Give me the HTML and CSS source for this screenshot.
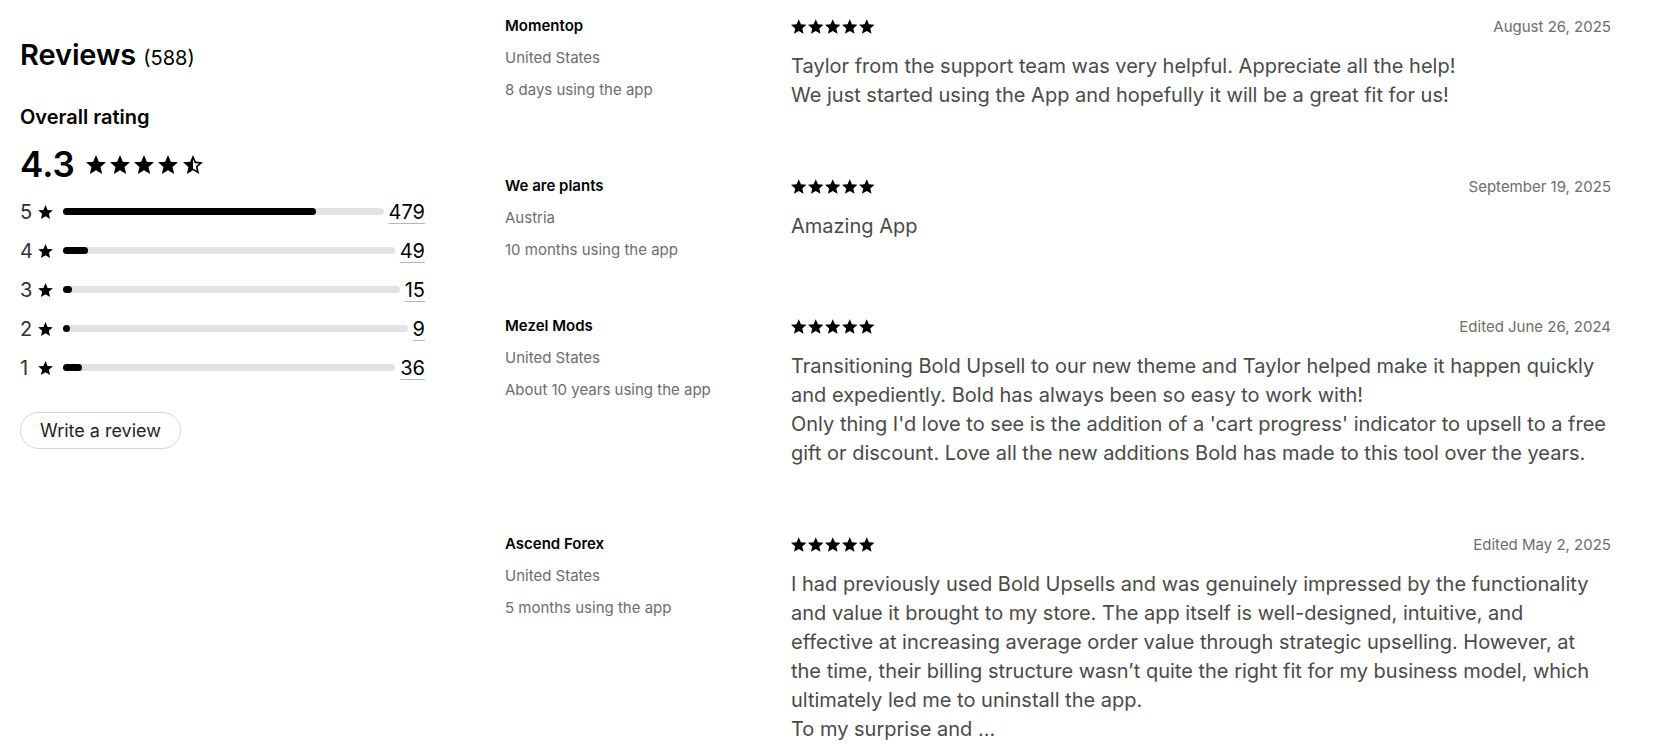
FILE: index.html
```html
<!DOCTYPE html>
<html lang="en">
<head>
<meta charset="utf-8">
<title>Reviews</title>
<link rel="stylesheet" href="styles.css">
</head>
<body>
<svg width="0" height="0" class="defs">
  <defs>
    <symbol id="star" viewBox="2 2 20 19"><path d="M12 17.27L18.18 21l-1.64-7.03L22 9.24l-7.19-.61L12 2 9.19 8.63 2 9.24l5.46 4.73L5.82 21z"/></symbol>
    <symbol id="star-half" viewBox="2 2 20 19"><path d="M22 9.24l-7.19-.62L12 2 9.19 8.63 2 9.24l5.46 4.73L5.82 21 12 17.27 18.18 21l-1.63-7.03L22 9.24zM12 15.4V6.1l1.71 4.04 4.38.38-3.32 2.88 1 4.28L12 15.4z"/></symbol>
  </defs>
</svg>
<div class="page">
  <aside class="summary">
    <h2 class="title">Reviews <span class="total">(588)</span></h2>
    <h3 class="overall-label">Overall rating</h3>
    <div class="overall">
      <span class="score">4.3</span>
      <span class="stars stars-lg">
        <svg><use href="#star"/></svg><svg><use href="#star"/></svg><svg><use href="#star"/></svg><svg><use href="#star"/></svg><svg><use href="#star-half"/></svg>
      </span>
    </div>
    <div class="bars">
      <div class="bar-row"><span class="lvl">5</span><svg class="lvl-star"><use href="#star"/></svg><div class="track"><div class="fill" style="width:78.8%"></div></div><a class="cnt" href="#">479</a></div>
      <div class="bar-row"><span class="lvl">4</span><svg class="lvl-star"><use href="#star"/></svg><div class="track"><div class="fill" style="width:7.5%"></div></div><a class="cnt" href="#">49</a></div>
      <div class="bar-row"><span class="lvl">3</span><svg class="lvl-star"><use href="#star"/></svg><div class="track"><div class="fill" style="width:2.6%"></div></div><a class="cnt" href="#">15</a></div>
      <div class="bar-row"><span class="lvl">2</span><svg class="lvl-star"><use href="#star"/></svg><div class="track"><div class="fill" style="width:2%"></div></div><a class="cnt" href="#">9</a></div>
      <div class="bar-row"><span class="lvl">1</span><svg class="lvl-star"><use href="#star"/></svg><div class="track"><div class="fill" style="width:5.8%"></div></div><a class="cnt" href="#">36</a></div>
    </div>
    <button class="write-btn" type="button">Write a review</button>
  </aside>

  <main class="reviews">
    <article class="review">
      <div class="author">
        <div class="name">Momentop</div>
        <div class="meta">
          <div>United States</div>
          <div>8 days using the app</div>
        </div>
      </div>
      <div class="body">
        <div class="head">
          <span class="stars stars-sm"><svg><use href="#star"/></svg><svg><use href="#star"/></svg><svg><use href="#star"/></svg><svg><use href="#star"/></svg><svg><use href="#star"/></svg></span>
          <span class="date">August 26, 2025</span>
        </div>
        <p class="text">Taylor from the support team was very helpful. Appreciate all the help!<br>We just started using the App and hopefully it will be a great fit for us!</p>
      </div>
    </article>

    <article class="review">
      <div class="author">
        <div class="name">We are plants</div>
        <div class="meta">
          <div>Austria</div>
          <div>10 months using the app</div>
        </div>
      </div>
      <div class="body">
        <div class="head">
          <span class="stars stars-sm"><svg><use href="#star"/></svg><svg><use href="#star"/></svg><svg><use href="#star"/></svg><svg><use href="#star"/></svg><svg><use href="#star"/></svg></span>
          <span class="date">September 19, 2025</span>
        </div>
        <p class="text">Amazing App</p>
      </div>
    </article>

    <article class="review">
      <div class="author">
        <div class="name">Mezel Mods</div>
        <div class="meta">
          <div>United States</div>
          <div>About 10 years using the app</div>
        </div>
      </div>
      <div class="body">
        <div class="head">
          <span class="stars stars-sm"><svg><use href="#star"/></svg><svg><use href="#star"/></svg><svg><use href="#star"/></svg><svg><use href="#star"/></svg><svg><use href="#star"/></svg></span>
          <span class="date">Edited June 26, 2024</span>
        </div>
        <p class="text">Transitioning Bold Upsell to our new theme and Taylor helped make it happen quickly and expediently. Bold has always been so easy to work with!<br>Only thing I'd love to see is the addition of a 'cart progress' indicator to upsell to a free gift or discount. Love all the new additions Bold has made to this tool over the years.</p>
      </div>
    </article>

    <article class="review">
      <div class="author">
        <div class="name">Ascend Forex</div>
        <div class="meta">
          <div>United States</div>
          <div>5 months using the app</div>
        </div>
      </div>
      <div class="body">
        <div class="head">
          <span class="stars stars-sm"><svg><use href="#star"/></svg><svg><use href="#star"/></svg><svg><use href="#star"/></svg><svg><use href="#star"/></svg><svg><use href="#star"/></svg></span>
          <span class="date">Edited May 2, 2025</span>
        </div>
        <p class="text">I had previously used Bold Upsells and was genuinely impressed by the functionality and value it brought to my store. The app itself is well-designed, intuitive, and effective at increasing average order value through strategic upselling. However, at the time, their billing structure wasn’t quite the right fit for my business model, which ultimately led me to uninstall the app.<br>To my surprise and ...</p>
      </div>
    </article>
  </main>
</div>
</body>
</html>
```

FILE: styles.css
```css
html, body {
  margin: 0;
  padding: 0;
  background: #ffffff;
  overflow: hidden;
}

body {
  font-family: "Inter", "Noto Sans", "Liberation Sans", sans-serif;
  color: #000;
}

.defs {
  position: absolute;
  width: 0;
  height: 0;
}

.page {
  display: flex;
  gap: 80px;
  padding: 0 42px 0 20px;
}

/* ---------- summary ---------- */
.summary {
  width: 405px;
  flex: none;
  padding-top: 37px;
  display: flex;
  flex-direction: column;
  align-items: flex-start;
}

.title {
  margin: 0;
  font-size: 29px;
  line-height: 36px;
  font-weight: 600;
  letter-spacing: -0.1px;
}

.total {
  font-size: 20px;
  font-weight: 400;
  letter-spacing: 0;
}

.overall-label {
  margin: 29px 0 0;
  font-size: 20px;
  line-height: 24px;
  font-weight: 600;
}

.overall {
  margin-top: 15px;
  display: flex;
  align-items: center;
  gap: 11px;
  height: 40px;
}

.score {
  font-size: 35px;
  line-height: 40px;
  font-weight: 600;
}

.stars {
  display: inline-flex;
  align-items: center;
  fill: #000;
}

.stars-lg {
  gap: 4.25px;
}

.stars-lg svg {
  width: 20px;
  height: 19px;
}

.bars {
  margin-top: 8px;
  width: 100%;
  display: flex;
  flex-direction: column;
}

.bar-row {
  display: flex;
  align-items: center;
  height: 39px;
  font-size: 20px;
}

.lvl {
  color: #303030;
  width: 12px;
  line-height: 22px;
}

.lvl-star {
  width: 15px;
  height: 14px;
  margin-left: 6px;
  fill: #000;
  flex: none;
}

.track {
  flex: 1;
  margin: 0 5px 0 10px;
  height: 7px;
  border-radius: 4px;
  background: #e3e3e3;
  position: relative;
}

.fill {
  height: 100%;
  min-width: 7px;
  border-radius: 4px;
  background: #000;
}

.cnt {
  color: #000;
  line-height: 22px;
  text-decoration: underline;
  text-decoration-color: #b5b5b5;
  text-decoration-thickness: 1px;
  text-underline-offset: 4px;
}

.write-btn {
  margin-top: 25px;
  height: 37px;
  padding: 0 19px;
  border: 1px solid #d6d6d6;
  border-radius: 19px;
  background: #fff;
  font-family: inherit;
  font-size: 18px;
  color: #1f1f1f;
  cursor: pointer;
}

/* ---------- reviews ---------- */
.reviews {
  flex: 1;
  padding-top: 16px;
  display: flex;
  flex-direction: column;
  gap: 50px;
}

.review {
  display: grid;
  grid-template-columns: 286px 1fr;
}

.name {
  font-size: 15px;
  line-height: 20px;
  font-weight: 600;
  color: #000;
}

.meta {
  margin-top: 6px;
  font-size: 15px;
  line-height: 32px;
  color: #6d6d6d;
}

.head {
  display: flex;
  justify-content: space-between;
  align-items: center;
  height: 20px;
}

.stars-sm {
  gap: 1.5px;
}

.stars-sm svg {
  width: 15.5px;
  height: 15px;
}

.date {
  font-size: 15px;
  color: #6d6d6d;
}

.text {
  margin: 15.5px 3px 16.5px 0;
  font-size: 20px;
  line-height: 29px;
  color: #4a4a4a;
}
```
